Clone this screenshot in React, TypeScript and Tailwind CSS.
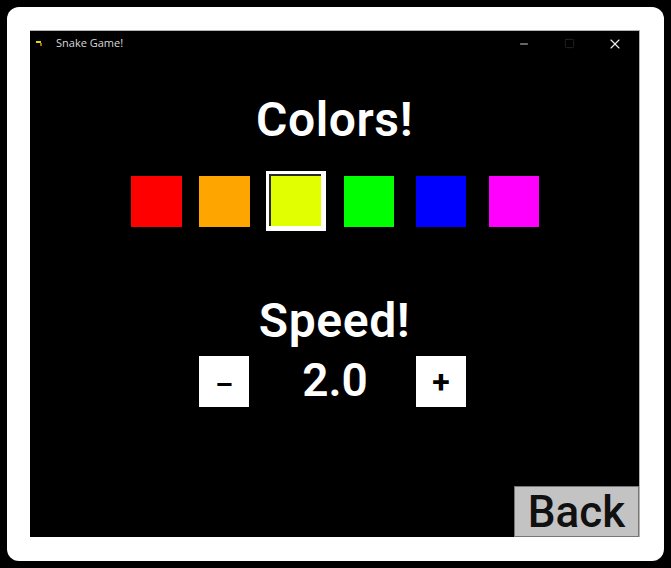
import { Minus, Square, X } from 'lucide-react'

const font = "font-['Roboto',sans-serif]"

function Swatch({ color, className }: { color: string; className: string }) {
  return <div className={`h-[51px] ${color} ${className}`} />
}

export default function App() {
  return (
    <div className="flex h-[568px] w-[671px] items-start bg-black pl-[7px] pt-[7px]">
      <div className="h-[554px] w-[657px] rounded-[12px] bg-white pl-[23px] pt-[23px]">
        <div className={`flex h-[507px] w-[610px] flex-col border-r border-t border-[#b4b4b4] bg-black ${font}`}>
          {/* Title bar */}
          <div className="flex h-[25px] items-center">
            <svg className="ml-[6px] h-[8px] w-[8px]" viewBox="0 0 8 8">
              <path d="M0 1h5v2H0z" fill="#d8e000" />
              <path d="M4 3h2v3H4z" fill="#b06a00" />
            </svg>
            <span className="ml-[12px] text-[11px] text-[#d8d8d8] font-['Open_Sans',sans-serif]">Snake Game!</span>
            <div className="ml-auto flex items-center">
              <Minus size={12} strokeWidth={1.8} className="text-[#e0e0e0]" />
              <Square size={11} strokeWidth={1.2} className="ml-[34px] text-[#3a3a3a]" />
              <X size={16} strokeWidth={1.7} className="ml-[32px] mr-[16px] text-[#f0f0f0]" />
            </div>
          </div>

          <h1 className="mt-[36px] h-[56px] text-center text-[48px] font-semibold leading-[56px] tracking-[0.6px] text-white">Colors!</h1>

          {/* Color picker */}
          <div className="mt-[23px] flex h-[60px] items-center pl-[101px]">
            <Swatch color="bg-[#ff0000]" className="w-[51px]" />
            <Swatch color="bg-[#ffa500]" className="ml-[17px] w-[51px]" />
            <div className="ml-[16px] h-[60px] w-[60px] border-b-[5px] border-l-[3px] border-r-[5px] border-t-[3px] border-white">
              <div className="h-full w-full border-l-2 border-t-2 border-[#2a2a2a] bg-[#e1ff00]" />
            </div>
            <Swatch color="bg-[#00ff00]" className="ml-[18px] w-[50px]" />
            <Swatch color="bg-[#0000ff]" className="ml-[22px] w-[50px]" />
            <Swatch color="bg-[#ff00ff]" className="ml-[23px] w-[50px]" />
          </div>

          <h2 className="mt-[63px] h-[54px] text-center text-[48px] font-semibold leading-[54px] tracking-[0.6px] text-white">Speed!</h2>

          {/* Speed controls */}
          <div className="mt-[8px] flex h-[51px] items-center pl-[169px]">
            <button className="flex h-[51px] w-[50px] items-center justify-center bg-white pt-[6px] text-[28px] font-bold text-black">–</button>
            <div className="w-[167px] pb-[3px] pl-[5px] text-center text-[46px] font-semibold text-white">2.0</div>
            <button className="flex h-[51px] w-[50px] items-center justify-center bg-white text-[32px] font-bold text-black">+</button>
          </div>

          <button className="ml-auto mt-auto flex h-[51px] w-[125px] items-center justify-center border border-[#777777] bg-[#c3c3c3] text-[44px] font-medium text-[#111111]">
            Back
          </button>
        </div>
      </div>
    </div>
  )
}
